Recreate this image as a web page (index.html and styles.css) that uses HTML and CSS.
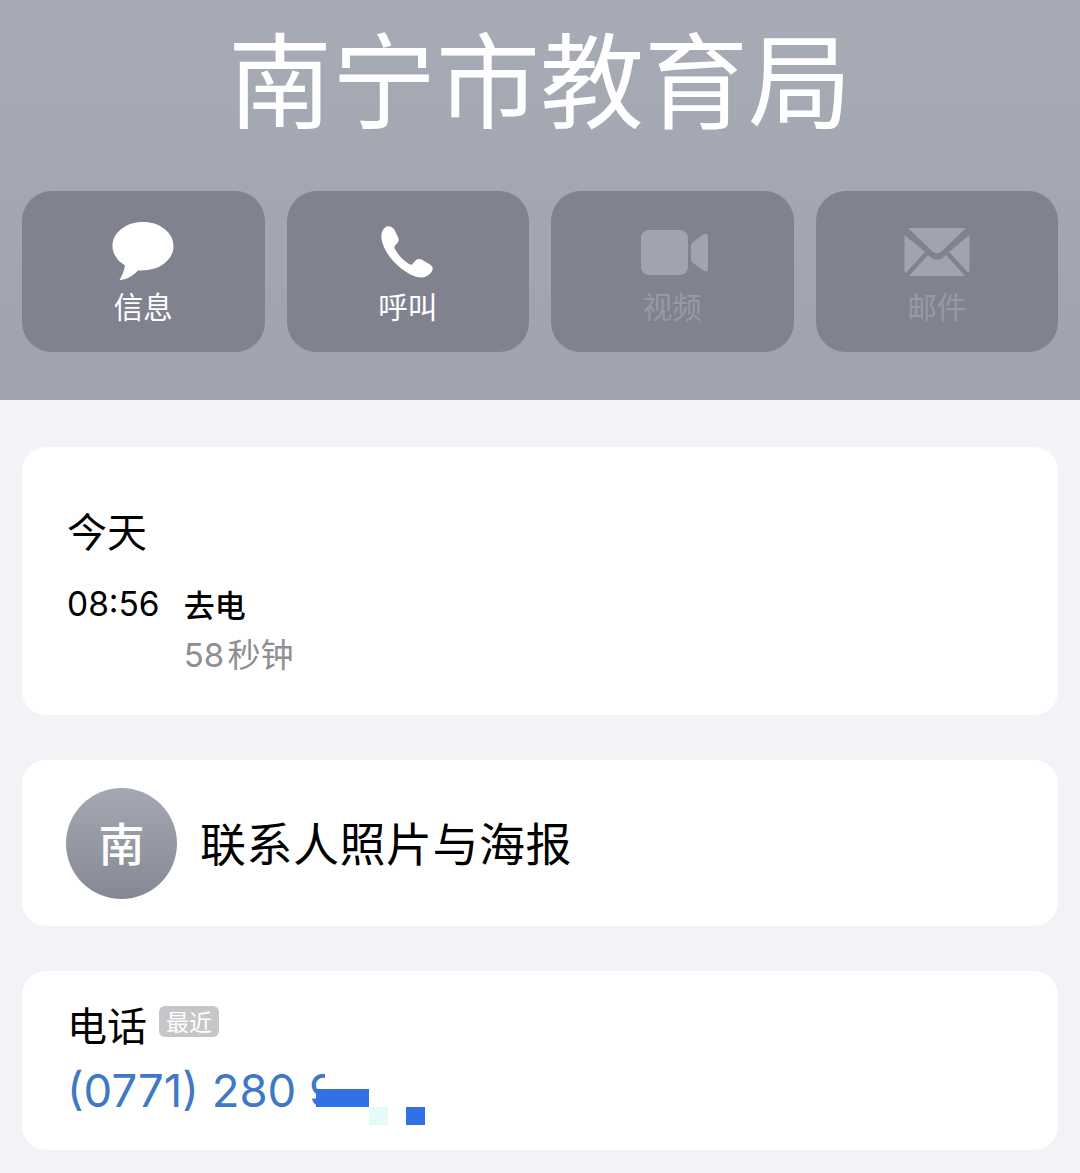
FILE: index.html
```html
<!DOCTYPE html>
<html lang="zh-CN">
<head>
    <meta charset="UTF-8">
    <meta name="viewport" content="width=device-width, initial-scale=1.0">
    <title>南宁市教育局</title>
    <link rel="stylesheet" href="styles.css">
</head>
<body>
    <div class="header">
        <h1 class="title">南宁市教育局</h1>
        <div class="actions">
            <div class="action">
                <svg class="icon" width="64" height="62" viewBox="0 0 64 62">
                    <path fill="#fff" d="M32 3C15 3 1.500 13.500 1.500 27C1.500 35 6.500 42 14 46.500C13.500 51 11 56.500 8.500 61C15 61 22 57 27 51.500C28.600 51.700 30.300 51.300 32 51.300C49 51.300 62.500 40.500 62.500 27C62.500 13.500 49 3 32 3Z"/>
                </svg>
                <span class="label">信息</span>
            </div>
            <div class="action">
                <svg class="icon" width="64" height="62" viewBox="0 0 64 62">
                    <path fill="#fff" d="M9 8.500C12 6 16 7.500 18 10L22 18C23.500 21 22.500 23 21 24.500L19 26.500C18 28 18.500 29.500 19.500 31C23 37 28 42 33 45C34.500 46 36 46 37 44.500L39.500 41.500C41 39.800 43.500 39.500 45.500 40.500L54 45.500C57 47.500 57.500 50.500 55.500 53C52.500 57.500 47 59.500 41 58C26 54 8 36 5.500 20C5 15 6 11 9 8.500Z"/>
                </svg>
                <span class="label">呼叫</span>
            </div>
            <div class="action action-off">
                <svg class="icon" width="76" height="62" viewBox="0 0 76 62">
                    <rect fill="#a0a4af" x="7" y="11" width="47" height="45" rx="8"/>
                    <path fill="#a0a4af" d="M57 27C57 25.500 57.500 24.500 58.500 23.500L69 15.500C71 14 74 14.500 74 17.500V49.500C74 52.500 71 53 69 51.500L58.500 43.500C57.500 42.500 57 41.500 57 40Z"/>
                </svg>
                <span class="label">视频</span>
            </div>
            <div class="action action-off">
                <svg class="icon" width="68" height="62" viewBox="0 0 68 62">
                    <path fill="#a0a4af" d="M5 9H63L39 32C36 35 32 35 29 32Z"/>
                    <path fill="#a0a4af" d="M1.500 16L22 33L2.500 54C2 53.500 1.500 52 1.500 50.500Z"/>
                    <path fill="#a0a4af" d="M66.500 16L46 33L65.500 54C66 53.500 66.500 52 66.500 50.500Z"/>
                    <path fill="#a0a4af" d="M6 57L25 36L28 38.500C32 41.500 36 41.500 40 38.500L43 36L62 57Z"/>
                </svg>
                <span class="label">邮件</span>
            </div>
        </div>
    </div>

    <div class="content">
        <div class="card card-recent">
            <div class="day">今天</div>
            <div class="call">
                <span class="time">08:56</span>
                <div>
                    <div class="call-type">去电</div>
                    <div class="call-length">58 秒钟</div>
                </div>
            </div>
        </div>

        <div class="card card-poster">
            <div class="avatar">南</div>
            <span class="poster-text">联系人照片与海报</span>
        </div>

        <div class="card card-phone">
            <div class="phone-head">
                <span class="phone-title">电话</span>
                <span class="badge">最近</span>
            </div>
            <div class="phone-number">
                (0771) 280 9
                <span class="mask mask-white"></span>
                <span class="mask mask-bar"></span>
                <span class="mask mask-cyan"></span>
                <span class="mask mask-dot"></span>
            </div>
        </div>
    </div>
</body>
</html>
```

FILE: styles.css
```css
*{
    margin: 0;
    padding: 0;
    box-sizing: border-box;
}
body{
    background-color: #f2f2f7;
    font-family: "Noto Sans CJK SC", "Liberation Sans", sans-serif;
    color: #000;
}
.header{
    height: 400px;
    padding: 0 22px;
    background: linear-gradient(#a7abb5, #a0a3ad);
    display: flex;
    flex-direction: column;
}
.title{
    height: 191px;
    padding-top: 9px;
    font-size: 104px;
    line-height: 133px;
    font-weight: 400;
    color: #fff;
    text-align: center;
    white-space: nowrap;
}
.actions{
    display: grid;
    grid-template-columns: repeat(4, 1fr);
    gap: 22px;
}
.action{
    height: 161px;
    padding-top: 28px;
    border-radius: 30px;
    background-color: #80838f;
    display: flex;
    flex-direction: column;
    align-items: center;
    color: #fff;
}
.action-off{
    color: #969aa5;
}
.icon{
    display: block;
}
.label{
    margin-top: 4px;
    font-size: 29.5px;
    line-height: 40px;
    font-weight: 400;
}
.content{
    padding: 47px 22px 0;
    display: flex;
    flex-direction: column;
    gap: 45px;
}
.card{
    background-color: #fff;
    border-radius: 24px;
}
.card-recent{
    height: 268px;
    padding: 57px 45px 0;
}
.day{
    font-size: 40px;
    line-height: 52px;
}
.call{
    margin-top: 26px;
    display: flex;
    gap: 24px;
}
.time{
    font-family: "Inter", "Liberation Sans", sans-serif;
    font-size: 33.5px;
    line-height: 44px;
}
.call-type{
    font-size: 31px;
    line-height: 44px;
    font-weight: 500;
}
.call-length{
    margin-top: 7px;
    font-family: "Inter", "Noto Sans CJK SC", sans-serif;
    font-size: 33px;
    line-height: 44px;
    word-spacing: -6px;
    color: #8e8e93;
}
.card-poster{
    height: 166px;
    padding: 0 44px;
    display: flex;
    align-items: center;
    gap: 23px;
}
.avatar{
    width: 111px;
    height: 111px;
    border-radius: 50%;
    background: linear-gradient(#a5a8b2, #858995);
    color: #fff;
    font-size: 46px;
    font-weight: 500;
    display: flex;
    align-items: center;
    justify-content: center;
    padding-bottom: 4px;
}
.poster-text{
    font-size: 46px;
    line-height: 60px;
    letter-spacing: 0.5px;
    padding-bottom: 4px;
}
.card-phone{
    height: 179px;
    padding: 28px 45px 0;
}
.phone-head{
    display: flex;
    align-items: flex-start;
    gap: 12px;
}
.phone-title{
    font-size: 40px;
    line-height: 50px;
}
.badge{
    margin-top: 7px;
    width: 60px;
    height: 31px;
    border-radius: 6px;
    background-color: #c6c6c8;
    color: #fff;
    font-size: 23px;
    line-height: 31px;
    text-align: center;
}
.phone-number{
    position: relative;
    margin-top: 12px;
    font-family: "Inter", "Liberation Sans", sans-serif;
    font-size: 45.5px;
    line-height: 60px;
    color: #3f78c6;
    white-space: nowrap;
}
.mask{
    position: absolute;
}
.mask-white{
    left: 258px;
    top: 0;
    width: 40px;
    height: 28px;
    background-color: #fff;
}
.mask-bar{
    left: 249px;
    top: 28px;
    width: 53px;
    height: 18px;
    background-color: #3270e6;
}
.mask-cyan{
    left: 302px;
    top: 46px;
    width: 19px;
    height: 18px;
    background-color: #e4fbf8;
}
.mask-dot{
    left: 339px;
    top: 46px;
    width: 19px;
    height: 18px;
    background-color: #3270e6;
}
```
